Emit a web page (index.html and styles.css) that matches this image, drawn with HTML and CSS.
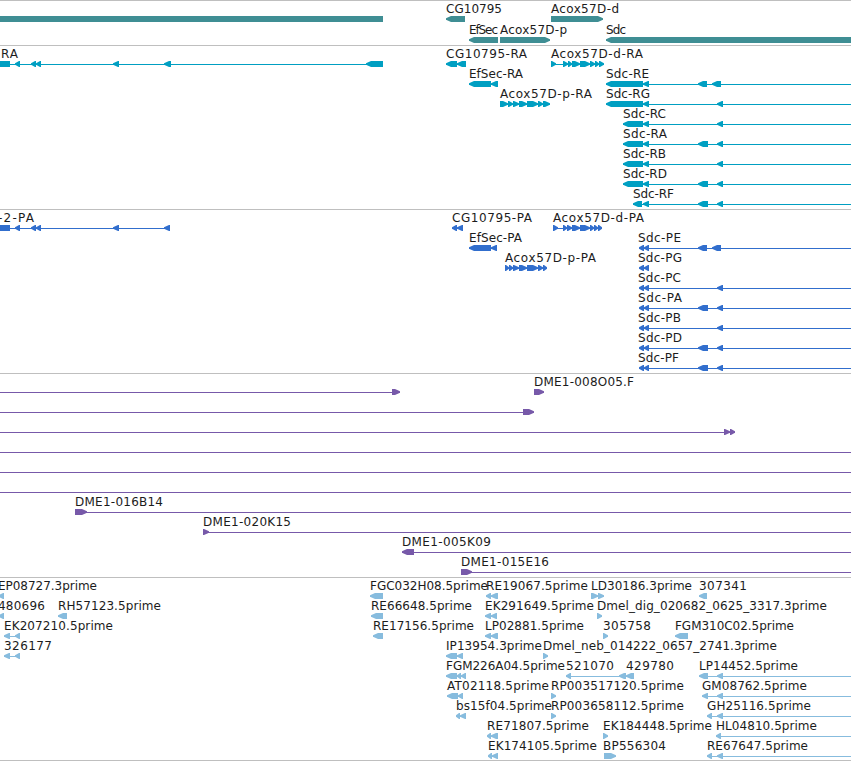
FILE: index.html
```
<!DOCTYPE html>
<html lang="en">
<head>
    <meta charset="UTF-8">
    <title>Genome Browser</title>
    <link rel="stylesheet" href="styles.css">
</head>
<body>

<div class="browser">
    <div class="track genes" id="genes"></div>
    <div class="track transcripts" id="transcripts"></div>
    <div class="track proteins" id="proteins"></div>
    <div class="track bacs" id="bacs"></div>
    <div class="track ests" id="ests"></div>
</div>

<script src="tracks.js"></script>

</body>
</html>
```
FILE: styles.css
```
body {
    margin: 0;
    background-color: #fff;
}
.browser {
    width: 851px;
    border-bottom: 1px solid #bfbfbf;
    overflow: hidden;
}
.track {
    border-top: 1px solid #bfbfbf;
}
.track svg {
    display: block;
}
.track text {
    font-family: "DejaVu Sans", sans-serif;
    font-size: 12px;
    fill: #1c1c1c;
}
.genes {
    color: #3f8e94;
}
.transcripts {
    color: #009fc2;
}
.proteins {
    color: #316ecd;
}
.bacs {
    color: #7759a9;
}
.ests {
    color: #87bcde;
}
.feature {
    fill: currentColor;
}
```
FILE: tracks.js
```
const WIDTH = 851;

// feature: [row, strand, exons, label, labelStart, labelEnd, lineStart, lineEnd]
// strand: '<' or '>' for arrows, '=' for blocks cut by the left edge
const tracks = {
    genes: { rows: 2, rowHeight: 21, padding: 2, features: [
        [0, '=', [[0, 383]]],
        [0, '<', [[446, 465]], 'CG10795', 446, 502],
        [0, '>', [[551, 603]], 'Acox57D-d', 551, 619],
        [1, '<', [[469, 498]], 'EfSec', 469, 498],
        [1, '>', [[500, 550]], 'Acox57D-p', 500, 567],
        [1, '<', [[606, 851]], 'Sdc', 606, 626]
    ]},
    transcripts: { rows: 8, rowHeight: 20, padding: 3, features: [
        [0, '=', [[0, 10]], 'RA', 1, 18],
        [0, '<', [[15, 20], [31, 36], [36, 41], [113, 119], [164, 171], [366, 383]], '', 0, 0, 0, 383],
        [0, '<', [[446, 457], [457, 466]], 'CG10795-RA', 446, 527],
        [0, '>', [[551, 556], [563, 568], [568, 572], [572, 580], [580, 590], [590, 595], [595, 599], [599, 604]], 'Acox57D-d-RA', 551, 643],
        [1, '<', [[469, 491], [491, 498]], 'EfSec-RA', 469, 523],
        [1, '<', [[606, 643], [643, 649], [698, 707], [712, 721]], 'Sdc-RE', 606, 649, 606, WIDTH],
        [2, '>', [[500, 508], [508, 513], [513, 519], [519, 527], [527, 538], [538, 543], [543, 550]], 'Acox57D-p-RA', 500, 592],
        [2, '<', [[606, 643], [643, 649], [717, 723]], 'Sdc-RG', 606, 650, 606, WIDTH],
        [3, '<', [[623, 643], [643, 649], [717, 723]], 'Sdc-RC', 623, 666, 623, WIDTH],
        [4, '<', [[623, 643], [643, 649], [698, 708], [717, 723]], 'Sdc-RA', 623, 667, 623, WIDTH],
        [5, '<', [[623, 643], [643, 649], [717, 723]], 'Sdc-RB', 623, 666, 623, WIDTH],
        [6, '<', [[623, 643], [643, 649], [698, 708], [717, 723]], 'Sdc-RD', 623, 667, 623, WIDTH],
        [7, '<', [[633, 642], [643, 649], [698, 708], [717, 723]], 'Sdc-RF', 633, 674, 633, WIDTH]
    ]},
    proteins: { rows: 8, rowHeight: 20, padding: 3, features: [
        [0, '=', [[0, 10]], '-2-PA', -2, 34],
        [0, '<', [[15, 20], [31, 36], [36, 41], [113, 119], [164, 170]], '', 0, 0, 0, 170],
        [0, '<', [[452, 457], [457, 463]], 'CG10795-PA', 452, 532],
        [0, '>', [[553, 558], [563, 567], [567, 572], [572, 580], [580, 590], [590, 594], [594, 598], [598, 602]], 'Acox57D-d-PA', 553, 644],
        [1, '<', [[469, 491], [491, 497]], 'EfSec-PA', 469, 522],
        [1, '<', [[639, 644], [644, 649], [698, 707], [712, 721]], 'Sdc-PE', 638, 681, 639, WIDTH],
        [2, '>', [[505, 509], [509, 513], [513, 519], [519, 527], [527, 538], [538, 543], [543, 547]], 'Acox57D-p-PA', 505, 596],
        [2, '<', [[639, 644], [644, 649]], 'Sdc-PG', 638, 682],
        [3, '<', [[639, 644], [644, 649], [717, 723]], 'Sdc-PC', 638, 681, 639, WIDTH],
        [4, '<', [[639, 644], [644, 649], [698, 708], [717, 723]], 'Sdc-PA', 638, 682, 639, WIDTH],
        [5, '<', [[639, 644], [644, 649], [717, 723]], 'Sdc-PB', 638, 681, 639, WIDTH],
        [6, '<', [[639, 644], [644, 649], [698, 708], [717, 723]], 'Sdc-PD', 638, 682, 639, WIDTH],
        [7, '<', [[639, 644], [644, 649], [698, 708], [717, 723]], 'Sdc-PF', 638, 679, 639, WIDTH]
    ]},
    bacs: { rows: 10, rowHeight: 20, padding: 3, features: [
        [0, '>', [[392, 400]], '', 0, 0, 0, 400],
        [0, '>', [[534, 544]], 'DME1-008O05.F', 534, 634],
        [1, '>', [[523, 534]], '', 0, 0, 0, 534],
        [2, '>', [[724, 730], [730, 735]], '', 0, 0, 0, 735],
        [3, '>', [], '', 0, 0, 0, WIDTH],
        [4, '>', [], '', 0, 0, 0, WIDTH],
        [5, '>', [], '', 0, 0, 0, WIDTH],
        [6, '>', [[75, 87]], 'DME1-016B14', 75, 163, 75, WIDTH],
        [7, '>', [[203, 209]], 'DME1-020K15', 203, 291, 203, WIDTH],
        [8, '<', [[402, 414]], 'DME1-005K09', 402, 491, 402, WIDTH],
        [9, '>', [[461, 472]], 'DME1-015E16', 461, 549, 461, WIDTH]
    ]},
    ests: { rows: 9, rowHeight: 20, padding: 2, features: [
        [0, '<', [[-2, 4]], 'EP08727.3prime', -2, 97],
        [0, '<', [[370, 383]], 'FGC032H08.5prime', 370, 488],
        [0, '<', [[486, 491], [491, 498]], 'RE19067.5prime', 486, 588],
        [0, '>', [[591, 598], [598, 604]], 'LD30186.3prime', 591, 692],
        [0, '<', [[699, 707]], '307341', 699, 747],
        [1, '<', [[-2, 4]], '480696', -2, 45],
        [1, '<', [[58, 67]], 'RH57123.5prime', 58, 161],
        [1, '<', [[371, 383]], 'RE66648.5prime', 371, 472],
        [1, '<', [[485, 491], [491, 497]], 'EK291649.5prime', 485, 594],
        [1, '>', [[597, 602]], 'Dmel_dig_020682_0625_3317.3prime', 597, 827],
        [2, '<', [[4, 10], [15, 20]], 'EK207210.5prime', 4, 113, 4, 20],
        [2, '<', [[373, 383]], 'RE17156.5prime', 373, 474],
        [2, '<', [[485, 491], [491, 498]], 'LP02881.5prime', 485, 584],
        [2, '>', [[603, 608]], '305758', 603, 651],
        [2, '<', [[675, 688]], 'FGM310C02.5prime', 675, 794],
        [3, '<', [[4, 10], [15, 20]], '326177', 4, 52, 4, 20],
        [3, '<', [[446, 457], [457, 463]], 'IP13954.3prime', 446, 542],
        [3, '>', [[543, 548]], 'Dmel_neb_014222_0657_2741.3prime', 543, 777],
        [4, '<', [[446, 457], [457, 461], [461, 466]], 'FGM226A04.5prime', 446, 565],
        [4, '<', [[566, 571], [619, 626]], '521070', 566, 614, 566, 627],
        [4, '<', [[626, 634]], '429780', 626, 674],
        [4, '<', [[699, 708], [717, 723]], 'LP14452.5prime', 699, 798, 699, WIDTH],
        [5, '<', [[447, 458], [458, 463]], 'AT02118.5prime', 447, 549],
        [5, '>', [[551, 556]], 'RP003517120.5prime', 551, 684],
        [5, '<', [[702, 708], [717, 723]], 'GM08762.5prime', 702, 807, 702, WIDTH],
        [6, '<', [[456, 460], [460, 466]], 'bs15f04.5prime', 456, 552],
        [6, '>', [[551, 556]], 'RP003658112.5prime', 551, 684],
        [6, '<', [[707, 712], [717, 723]], 'GH25116.5prime', 707, 811, 707, WIDTH],
        [7, '<', [[487, 491], [491, 498]], 'RE71807.5prime', 487, 589],
        [7, '>', [[603, 608]], 'EK184448.5prime', 603, 712],
        [7, '<', [[716, 721]], 'HL04810.5prime', 716, 817, 716, WIDTH],
        [8, '<', [[488, 492], [492, 498]], 'EK174105.5prime', 488, 597],
        [8, '>', [[604, 616]], 'BP556304', 603, 666],
        [8, '<', [[707, 712], [717, 723]], 'RE67647.5prime', 707, 808, 707, WIDTH]
    ]}
};

function drawExon(strand, x1, x2, top) {
    const bottom = top + 6;
    const head = Math.min(5, x2 - x1 - 1);
    let points;

    // arrow tips are slightly blunt
    if (strand === '<') {
        points = [[x1, top + 2.3], [x1 + head, top], [x2, top], [x2, bottom], [x1 + head, bottom], [x1, top + 3.7]];
    } else if (strand === '>') {
        points = [[x1, top], [x2 - head, top], [x2, top + 2.3], [x2, top + 3.7], [x2 - head, bottom], [x1, bottom]];
    } else {
        points = [[x1, top], [x2, top], [x2, bottom], [x1, bottom]];
    }
    return `<polygon points="${points.join(' ')}"/>`;
}

function drawTrack(id) {
    const track = tracks[id];
    const height = track.rows * track.rowHeight + track.padding;
    let shapes = '';
    let labels = '';

    track.features.forEach(([row, strand, exons, label, labelStart, labelEnd, lineStart, lineEnd]) => {
        const y = row * track.rowHeight;
        // without a line of its own a feature is joined from its first exon to its last
        const from = lineEnd ? lineStart : exons[0][0];
        const to = lineEnd ? lineEnd : exons[exons.length - 1][1];

        shapes += `<rect x="${from}" y="${y + 18}" width="${to - from}" height="1"/>`;
        exons.forEach(([x1, x2]) => {
            shapes += drawExon(strand, x1, x2, y + 15);
        });
        if (label) {
            labels += `<text x="${labelStart}" y="${y + 12}" textLength="${labelEnd - labelStart}">${label}</text>`;
        }
    });

    document.getElementById(id).innerHTML =
        `<svg width="${WIDTH}" height="${height}"><g class="feature">${shapes}</g>${labels}</svg>`;
}

Object.keys(tracks).forEach(drawTrack);
```
